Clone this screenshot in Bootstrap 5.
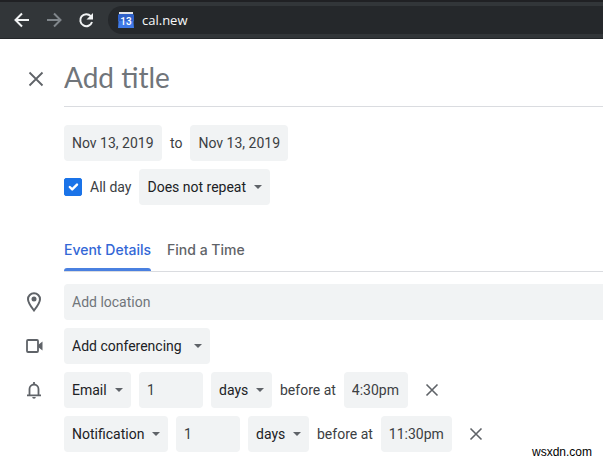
<!DOCTYPE html>
<html lang="en">
<head>
<meta charset="utf-8">
<meta name="viewport" content="width=device-width, initial-scale=1">
<title>New event</title>
<link href="https://cdn.jsdelivr.net/npm/bootstrap@5.3.0/dist/css/bootstrap.min.css" rel="stylesheet">
<style>
body{font-family:Roboto,"Liberation Sans",sans-serif;font-size:14px;line-height:20px;color:#3c4043;background:#fff;overflow-x:hidden}
svg{display:block}
.browser-bar{height:39px;background:#323639;border-top:2px solid #202124;border-bottom:1px solid #24272a;padding-left:14px}
.tool{width:16px;height:16px;color:#f1f3f4}
.tool:disabled{color:#80868b;opacity:1}
.omnibox{height:28px;background:#25282b;border-radius:14px 0 0 14px;margin-left:14px;padding-left:10px}
.address{font:13px/20px "Open Sans","Noto Sans",sans-serif;color:#f8f9fa}
.address:focus,.title-input:focus,.field:focus{outline:2px solid #1a73e8}
.gutter{width:64px;flex:none;color:#5f6368}
.gutter-icon{margin-left:24px}
.title-row{padding-top:18px}
.title-line{border-bottom:1px solid #dadce0;padding-bottom:9px}
.title-input{font:28px/40px Lato,Roboto,sans-serif;color:#3c4043;height:40px}
.title-input::placeholder{color:#70757a;opacity:1}
.schedule{padding-left:64px;padding-top:18px}
.field{height:36px;border:0;border-radius:4px;background-color:#f1f3f4;color:#3c4043;padding:0 8px;line-height:36px}
.field::placeholder{color:#70757a;opacity:1}
select.field{appearance:none;color:#202124;background-image:url("data:image/svg+xml,%3Csvg xmlns='http://www.w3.org/2000/svg' viewBox='0 0 8 4'%3E%3Cpath fill='%235f6368' d='M0 0h8L4 4z'/%3E%3C/svg%3E");background-repeat:no-repeat;background-size:8px 4px;background-position:right 8px center}
.w-date{width:98px}
.w-repeat{width:131px}
.w-conf{width:146px}
.w-email{width:67px}
.w-notify{width:104px}
.w-count{width:64px}
.w-unit{width:61px}
.w-time{width:64px}
.w-time-long{width:71px}
.all-day{width:18px;height:18px;margin:0;border-radius:2px!important}
.all-day:checked{background-color:#1a73e8;border-color:#1a73e8}
.tab-row{margin-left:64px;margin-top:29px;gap:16px;border-bottom:1px solid #dadce0;font:500 14px/20px Inter,Roboto,sans-serif}
.tab-row .tab{color:#5f6368;height:37px;padding-top:6px;position:relative;text-decoration:none}
.tab-row .tab.active{color:#3367d6;}
.tab-row .tab.active::after{content:"";position:absolute;left:0;right:0;bottom:0;height:3px;background:#4a80e0;border-radius:3px 3px 0 0}
.details{padding-top:12px}
.icon-btn{margin-left:16px;color:#5f6368}
.credit{font:12px/14px "Liberation Sans",sans-serif;color:#000;padding-right:11px;margin-top:-7px}
</style>
<script src="https://cdn.jsdelivr.net/npm/bootstrap@5.3.0/dist/js/bootstrap.bundle.min.js"></script>
</head>
<body>
<header class="browser-bar d-flex align-items-center">
  <div class="d-flex gap-3">
    <button class="tool btn p-0 border-0" aria-label="Back"><svg width="16" height="16" viewBox="0 0 16 16" fill="none" stroke="currentColor" stroke-width="2"><path d="M15 8H2M8 1.5 1.5 8 8 14.5"/></svg></button>
    <button class="tool btn p-0 border-0" aria-label="Forward" disabled><svg width="16" height="16" viewBox="0 0 16 16" fill="none" stroke="currentColor" stroke-width="2"><path d="M1 8h13M8 1.5 14.5 8 8 14.5"/></svg></button>
    <button class="tool btn p-0 border-0" aria-label="Reload"><svg width="16" height="16" viewBox="0 0 16 16"><path d="M12.8 4.2A6 6 0 1 0 14 10" fill="none" stroke="currentColor" stroke-width="2"/><path d="M15 1v6.5H8.5z" fill="currentColor"/></svg></button>
  </div>
  <div class="omnibox d-flex align-items-center flex-grow-1 gap-2">
    <svg width="16" height="16" viewBox="0 0 16 16" aria-hidden="true"><path d="M1 0h14v4H1z" fill="#e3e5e8"/><path d="M0 4l1-2h14l1 2v4l-.5 2 .5 6H0l.5-6L0 8z" fill="#3f7ae8"/><path d="M0 4l1-2h14l1 2v4l-1 1H1L0 8z" fill="#2f61c9"/><text x="8" y="12.500" text-anchor="middle" font-family="Roboto" font-size="10" font-weight="500" fill="#fff">13</text></svg>
    <input class="address bg-transparent border-0 p-0 flex-grow-1" aria-label="Address" value="cal.new">
  </div>
</header>
<main>
  <div class="title-row d-flex">
    <div class="gutter d-flex align-items-start pt-2"><button class="btn p-0 border-0 gutter-icon" aria-label="Close"><svg width="24" height="24" viewBox="0 0 24 24" fill="none" stroke="#5f6368" stroke-width="1.800"><path d="M5.500 7.500l13 13M18.500 7.500l-13 13"/></svg></button></div>
    <div class="title-line flex-grow-1"><input class="title-input w-100 d-block border-0 p-0" aria-label="Title" placeholder="Add title"></div>
  </div>
  <div class="schedule d-flex flex-column gap-2">
    <div class="d-flex align-items-center gap-2">
      <input class="field w-date" aria-label="Start date" value="Nov 13, 2019"><span>to</span><input class="field w-date" aria-label="End date" value="Nov 13, 2019">
    </div>
    <div class="d-flex align-items-center gap-2">
      <input class="form-check-input all-day" type="checkbox" id="allday" checked><label for="allday">All day</label>
      <select class="field w-repeat" aria-label="Repeat"><option>Does not repeat</option><option>Daily</option></select>
    </div>
  </div>
  <nav class="tab-row d-flex" aria-label="Event sections"><a class="tab active" href="#details" aria-current="page">Event Details</a><a class="tab" href="#time">Find a Time</a></nav>
  <section class="details d-flex flex-column gap-2" id="details">
    <div class="d-flex align-items-center">
      <div class="gutter"><svg class="gutter-icon" width="20" height="20" viewBox="0 0 20 20" fill="none" stroke="currentColor" stroke-width="2"><path d="M10 18.500C6.500 14 4 10.700 4 7.200a6 6 0 0 1 12 0c0 3.500-2.500 6.800-6 11.300z"/><circle cx="10" cy="7" r="2.500" fill="currentColor" stroke="none"/></svg></div>
      <input class="field flex-grow-1 rounded-end-0" aria-label="Location" placeholder="Add location">
    </div>
    <div class="d-flex align-items-center">
      <div class="gutter"><svg class="gutter-icon" width="20" height="20" viewBox="0 0 20 20"><rect x="3" y="4" width="11" height="12" rx="1" fill="none" stroke="currentColor" stroke-width="1.800"/><path d="M14 9l4.500-3.500v9L14 11z" fill="currentColor"/></svg></div>
      <select class="field w-conf" aria-label="Conferencing"><option>Add conferencing</option></select>
    </div>
    <div class="d-flex align-items-center">
      <div class="gutter"><svg class="gutter-icon" width="20" height="20" viewBox="0 0 20 20"><path d="M5.500 15V9a4.500 4.500 0 0 1 9 0v6M3 15.300h14M10 4.500V2" fill="none" stroke="currentColor" stroke-width="1.800"/><path d="M8.200 17h3.600a1.800 1.800 0 0 1-3.600 0z" fill="currentColor"/></svg></div>
      <div class="d-flex align-items-center gap-2">
        <select class="field w-email" aria-label="First reminder type"><option>Email</option><option>Notification</option></select>
        <input class="field w-count" aria-label="First reminder amount" value="1">
        <select class="field w-unit" aria-label="First reminder unit"><option>days</option><option>weeks</option></select>
        <span>before at</span>
        <input class="field w-time" aria-label="First reminder time" value="4:30pm">
      </div>
      <button class="btn p-0 border-0 icon-btn" aria-label="Remove first reminder"><svg width="16" height="16" viewBox="0 0 16 16" fill="none" stroke="currentColor" stroke-width="1.600"><path d="M2.500 2.500l11 11M13.500 2.500l-11 11"/></svg></button>
    </div>
    <div class="d-flex align-items-center">
      <div class="gutter"></div>
      <div class="d-flex align-items-center gap-2">
        <select class="field w-notify" aria-label="Second reminder type"><option>Notification</option><option>Email</option></select>
        <input class="field w-count" aria-label="Second reminder amount" value="1">
        <select class="field w-unit" aria-label="Second reminder unit"><option>days</option><option>weeks</option></select>
        <span>before at</span>
        <input class="field w-time-long" aria-label="Second reminder time" value="11:30pm">
      </div>
      <button class="btn p-0 border-0 icon-btn" aria-label="Remove second reminder"><svg width="16" height="16" viewBox="0 0 16 16" fill="none" stroke="currentColor" stroke-width="1.600"><path d="M2.500 2.500l11 11M13.500 2.500l-11 11"/></svg></button>
    </div>
  </section>
</main>
<footer class="credit text-end">wsxdn.com</footer>
</body>
</html>
